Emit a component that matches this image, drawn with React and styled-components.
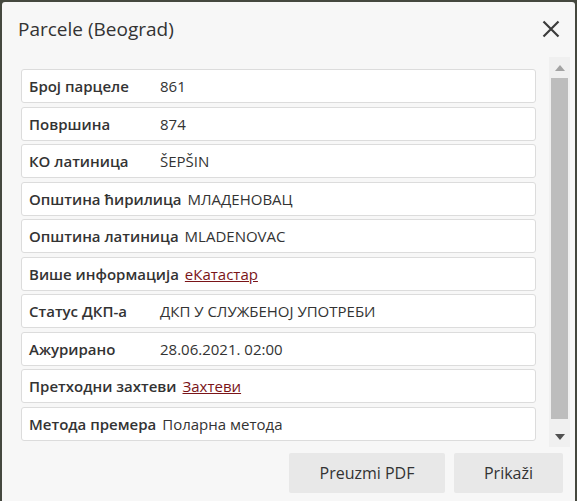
import React from 'react';
import styled, { createGlobalStyle } from 'styled-components';

const GlobalStyle = createGlobalStyle`
  html, body {
    margin: 0;
    padding: 0;
    background: #45483f;
    font-family: "Open Sans", "Noto Sans", sans-serif;
  }
`;

const Dialog = styled.div`
  box-sizing: border-box;
  margin: 2px 2px 0 2px;
  height: 499px;
  background: #f7f7f7;
  border-radius: 3px 3px 0 0;
  display: flex;
  flex-direction: column;
  color: #333;
`;

const Header = styled.div`
  height: 55px;
  display: flex;
  align-items: center;
  justify-content: space-between;
  padding: 0 12px 0 16px;
`;

const Title = styled.h1`
  margin: 0;
  font-size: 19px;
  font-weight: 400;
  color: #333;
  line-height: 1;
  margin-top: -1px;
`;

const CloseButton = styled.button`
  border: none;
  background: transparent;
  padding: 0;
  width: 24px;
  height: 24px;
  display: flex;
  align-items: center;
  justify-content: center;
  cursor: pointer;
  margin-top: -2px;
`;

const Body = styled.div`
  height: 390px;
  display: flex;
  padding-left: 19px;
  padding-right: 5px;
`;

const List = styled.ul`
  list-style: none;
  margin: 0;
  padding: 12px 0 0 0;
  flex: 1;
  overflow: hidden;
  margin-right: 13px;
`;

const Row = styled.li`
  box-sizing: border-box;
  height: 34px;
  margin-bottom: 3.5px;
  background: #fff;
  border: 1px solid #dcdcdc;
  border-radius: 3px;
  display: flex;
  align-items: center;
  padding: 0 8px 0 7px;
  font-size: 15px;
  white-space: nowrap;
`;

const Label = styled.span`
  min-width: 125px;
  margin-right: 6px;
  font-weight: 600;
  color: #333;
`;

const Value = styled.span`
  color: #333;
`;

const Link = styled.a`
  color: #7a1418;
  text-decoration: underline;
`;

const Scrollbar = styled.div`
  width: 21px;
  background: #f0f0f0;
  display: flex;
  flex-direction: column;
  align-items: center;
`;

const Arrow = styled.div`
  height: 21px;
  display: flex;
  align-items: center;
  justify-content: center;
`;

const Thumb = styled.div`
  width: 17px;
  height: 341px;
  background: #bdbdbd;
`;

const Spacer = styled.div`
  flex: 1;
`;

const Footer = styled.div`
  display: flex;
  justify-content: flex-end;
  gap: 9px;
  padding: 6px 12px 0 0;
`;

const Button = styled.button`
  box-sizing: border-box;
  height: 40px;
  width: ${p => p.w}px;
  border: none;
  border-radius: 2px;
  background: #e8e8e8;
  color: #333;
  font-family: "Open Sans", "Noto Sans", sans-serif;
  font-size: 16px;
  cursor: pointer;
`;

const rows = [
  { label: 'Број парцеле', value: '861' },
  { label: 'Површина', value: '874' },
  { label: 'КО латиница', value: 'ŠEPŠIN' },
  { label: 'Општина ћирилица', value: 'МЛАДЕНОВАЦ' },
  { label: 'Општина латиница', value: 'MLADENOVAC' },
  { label: 'Више информација', link: 'еКатастар' },
  { label: 'Статус ДКП-а', value: 'ДКП У СЛУЖБЕНОЈ УПОТРЕБИ' },
  { label: 'Ажурирано', value: '28.06.2021. 02:00' },
  { label: 'Претходни захтеви', link: 'Захтеви' },
  { label: 'Метода премера', value: 'Поларна метода' },
];

export default function App() {
  return (
    <>
      <GlobalStyle />
      <Dialog>
        <Header>
          <Title>Parcele (Beograd)</Title>
          <CloseButton aria-label="Zatvori">
            <svg width="18" height="18" viewBox="0 0 18 18">
              <path d="M1.5 1.5 L16.5 16.5 M16.5 1.5 L1.5 16.5" stroke="#3c3c3c" strokeWidth="2.2" />
            </svg>
          </CloseButton>
        </Header>
        <Body>
          <List>
            {rows.map(r => (
              <Row key={r.label}>
                <Label>{r.label}</Label>
                {r.link ? <Link href="#">{r.link}</Link> : <Value>{r.value}</Value>}
              </Row>
            ))}
          </List>
          <Scrollbar>
            <Arrow>
              <svg width="10" height="6" viewBox="0 0 10 6">
                <path d="M0 6 L5 0 L10 6 Z" fill="#a3a3a3" />
              </svg>
            </Arrow>
            <Thumb />
            <Spacer />
            <Arrow>
              <svg width="10" height="6" viewBox="0 0 10 6">
                <path d="M0 0 L10 0 L5 6 Z" fill="#505050" />
              </svg>
            </Arrow>
          </Scrollbar>
        </Body>
        <Footer>
          <Button w={156}>Preuzmi PDF</Button>
          <Button w={109}>Prikaži</Button>
        </Footer>
      </Dialog>
    </>
  );
}
